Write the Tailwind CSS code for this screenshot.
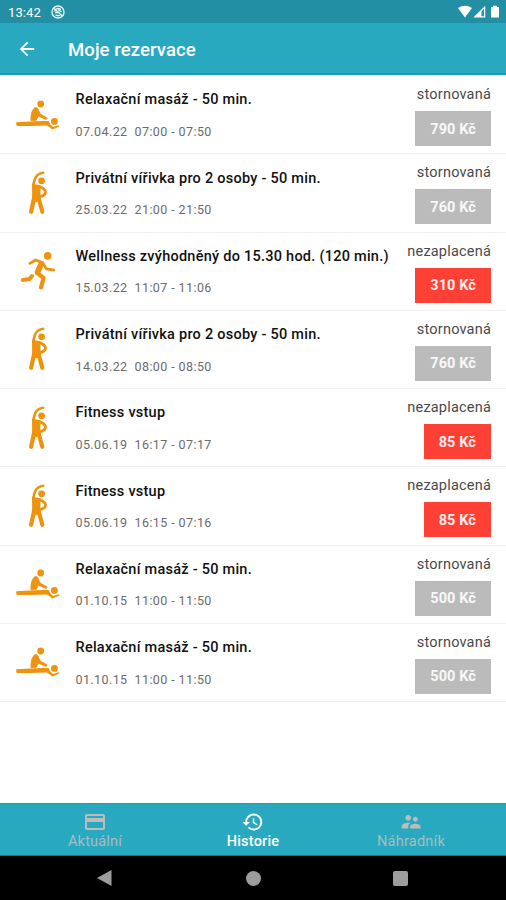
<!DOCTYPE html>
<html lang="cs">
<head>
<meta charset="utf-8">
<title>Moje rezervace</title>
<script src="https://cdn.jsdelivr.net/npm/@tailwindcss/browser@4"></script>
</head>
<body class="bg-white">
<svg class="hidden">
  <symbol id="massage" viewBox="0 0 48 48">
    <g fill="currentColor" stroke="currentColor" stroke-linejoin="round" stroke-linecap="round">
      <circle cx="26.7" cy="13" r="3.4" stroke="none"/>
      <path stroke-width="1" d="M17 29.3C16.8 24 17.8 20 20 17.4C21.4 16 23.5 16.6 24 18.3L26 23L32.5 26.6C33.4 27.3 32.7 28.7 31.6 28.3L24.8 25.2L23 23.2L24.3 25.6L22 29.3Z"/>
      <path stroke="none" d="M2.3 31.2L16 30.6L28 30H34.6L36.4 33.5L39 36L44.6 34.2L45.5 35.6L38.5 38.6L33 34.6L16 35H3.2Q2 35 2.3 31.2Z"/>
      <circle cx="40.4" cy="30.4" r="3.4" stroke="none"/>
    </g>
  </symbol>
  <symbol id="stretch" viewBox="0 0 48 48">
    <circle cx="27.6" cy="11.8" r="3.4" fill="currentColor"/>
    <g fill="none" stroke="currentColor" stroke-linecap="round" stroke-linejoin="round">
      <path stroke-width="2.6" d="M29.2 3.800C25.500 4.400 22.800 6 21.300 9C20.200 11.500 19.700 14 19.300 17"/>
      <path stroke-width="2.8" d="M24 17.200C28.500 18.500 31.500 21 31.500 23.300C31.200 25.600 29 27 26.200 27.600"/>
      <path stroke-width="4.200" d="M20.300 28L17.100 42.800M24.300 28L28.300 42.800"/>
    </g>
    <path fill="currentColor" d="M18 14.500C20 15 24 15.800 26.600 16.600L26.300 31L22.500 33.200L18.200 31Z"/>
  </symbol>
  <symbol id="run" viewBox="0 0 48 48">
    <circle cx="33.7" cy="8.9" r="3.8" fill="currentColor"/>
    <g fill="none" stroke="currentColor" stroke-linecap="round" stroke-linejoin="round">
      <path stroke-width="2.8" d="M15.8 16.4L21.5 13L28.5 15.6L32.4 21.8L39.8 23.2"/>
      <path stroke-width="5.8" d="M27.2 17L23.6 25.2"/>
      <path stroke-width="4.200" d="M23.4 26.2L29.6 31L27 40.4"/>
      <path stroke-width="4" d="M18 29L15.6 32L8.800 33"/>
    </g>
  </symbol>
</svg>
<div class="w-[506px] h-[900px] overflow-hidden flex flex-col font-[Roboto,sans-serif]">
  <div class="h-[23px] shrink-0 bg-[#238fa4] flex items-center pl-2 pr-[6px] text-white">
    <span class="text-[13px] leading-none w-[43px] pt-[2px] tracking-[0.1px]">13:42</span>
    <svg class="w-[14px] h-[14px]" viewBox="0 0 14 14" fill="none" stroke="#e4f3f6">
      <circle cx="7" cy="7" r="6" stroke-width="1.4"/><path stroke-width="1.4" d="M4.500 9.800A3.600 3.600 0 0 0 10 9M3.600 6.500A3.600 3.600 0 0 1 9.800 4.700"/>
      <path stroke-width="1.5" d="M2.5 3L11.5 11M4 7.5H7M7 4.5L10.5 7"/>
    </svg>
    <svg class="ml-auto w-[42px] h-[14px]" viewBox="0 0 42 14">
      <path fill="#fff" d="M0 3Q7 -1.5 14 3L7 12.5Z"/>
      <path fill="none" stroke="#fff" stroke-width="1.3" d="M17 11.8L26.6 2.2V11.8Z"/><path fill="#fff" d="M17 12L23.5 5.5V12Z"/>
      <path fill="#fff" d="M33 2H35V0.7H39V2H41V12.5H33Z"/>
    </svg>
  </div>
  <header class="h-[52px] shrink-0 bg-[#28a9c0] border-b-2 border-[#159fb6] flex items-center text-white">
    <svg class="ml-[17px] mt-[1px] w-5 h-5" viewBox="2 2 20 20" fill="#fff"><path d="M20 11H7.83l5.59-5.59L12 4l-8 8 8 8 1.41-1.41L7.83 13H20z" transform="translate(1.2 1.2) scale(.9)"/></svg>
    <h1 class="ml-[31px] pt-[5px] text-[18.5px] font-medium tracking-[0.1px]">Moje rezervace</h1>
  </header>
  <main id="list" class="flex-1 bg-white pt-px"></main>
  <nav class="h-[53px] shrink-0 bg-[#28a9c0] border-t border-b border-t-[#169fb5] border-b-[#17798a] grid grid-cols-[190px_126px_190px] text-[14.5px] text-[#a9bcc2]">
    <div class="flex flex-col items-center pt-[6px]">
      <svg class="w-6 h-6" viewBox="0 0 24 24" fill="#bcbcbc"><path d="M20 4H4c-1.11 0-1.99.89-1.99 2L2 18c0 1.11.89 2 2 2h16c1.11 0 2-.89 2-2V6c0-1.11-.89-2-2-2zm0 14H4v-6h16v6zm0-10H4V6h16v2z"/></svg>
      <span class="leading-4 tracking-[0.2px]">Aktuální</span>
    </div>
    <div class="flex flex-col items-center pt-[6px] text-white">
      <svg class="w-6 h-6" viewBox="-0.5 -0.7 25.400 25.400" fill="currentColor"><path d="M13 3a9 9 0 0 0-9 9H1l3.890 3.890.070.140L9 12H6c0-3.870 3.130-7 7-7s7 3.130 7 7-3.130 7-7 7c-1.930 0-3.680-.790-4.940-2.060l-1.420 1.420A8.954 8.954 0 0 0 13 21a9 9 0 0 0 0-18zm-1 5v5l4.280 2.540.720-1.210-3.500-2.080V8H12z"/></svg>
      <span class="leading-4 font-medium tracking-[0.2px]">Historie</span>
    </div>
    <div class="flex flex-col items-center pt-[6px]">
      <svg class="w-6 h-6" viewBox="0 0 24 24" fill="#bcbcbc"><path d="M16.5 12c1.38 0 2.49-1.12 2.49-2.5S17.88 7 16.5 7a2.5 2.5 0 0 0 0 5zM9 11c1.66 0 2.99-1.34 2.99-3S10.66 5 9 5 6 6.34 6 8s1.34 3 3 3zm7.5 3c-1.83 0-5.5.92-5.5 2.75V19h11v-2.25c0-1.83-3.67-2.75-5.500-2.750zM9 13c-2.330 0-7 1.170-7 3.500V19h7v-2.250c0-.850.330-2.340 2.370-3.470C10.500 13.100 9.660 13 9 13z" transform="translate(.7 0) scale(.95 .98)"/></svg>
      <span class="leading-4 tracking-[0.25px]">Náhradník</span>
    </div>
  </nav>
  <div class="h-[44px] shrink-0 bg-black flex items-center justify-between pl-[97px] pr-[98px] text-[#9d9d9d]">
    <svg class="w-[15px] h-4" viewBox="0 0 15 16" fill="currentColor"><path d="M0 8L14.500 0V16Z"/></svg>
    <div class="w-[15px] h-[15px] rounded-full bg-[#9d9d9d] ml-px"></div>
    <div class="w-[15px] h-[15px] rounded-[2px] bg-[#9d9d9d]"></div>
  </div>
</div>
<template id="row">
  <article class="h-[78.25px] border-b border-[#f0f0f0] flex pl-[14px] pr-[15px]">
    <svg class="w-12 h-12 mt-[14.5px] text-[#ee930f]"><use/></svg>
    <div class="ml-[13.500px] flex-1 whitespace-nowrap">
      <h2 class="mt-[14.4px] text-[14.500px] leading-5 font-medium text-[#111111] tracking-[0.250px]"></h2>
      <p class="mt-[13.6px] text-[12.500px] leading-4 text-[#6c6c6c] tracking-[0.410px] whitespace-pre"></p>
    </div>
    <div class="flex flex-col items-end">
      <span class="mt-[9px] text-[14.500px] leading-5 text-[#4a4a4a] tracking-[0.200px]"></span>
      <b class="mt-[6px] h-[35px] px-[15px] pt-[2px] flex items-center text-[14.500px] font-bold text-white/90 tracking-[0.1px] whitespace-nowrap"></b>
    </div>
  </article>
</template>
<script>
const items = [
  ['massage', 'Relaxační masáž - 50 min.', '07.04.22  07:00 - 07:50', 'stornovaná', '790 Kč'],
  ['stretch', 'Privátní vířivka pro 2 osoby - 50 min.', '25.03.22  21:00 - 21:50', 'stornovaná', '760 Kč'],
  ['run', 'Wellness zvýhodněný do 15.30 hod. (120 min.)', '15.03.22  11:07 - 11:06', 'nezaplacená', '310 Kč'],
  ['stretch', 'Privátní vířivka pro 2 osoby - 50 min.', '14.03.22  08:00 - 08:50', 'stornovaná', '760 Kč'],
  ['stretch', 'Fitness vstup', '05.06.19  16:17 - 07:17', 'nezaplacená', '85 Kč'],
  ['stretch', 'Fitness vstup', '05.06.19  16:15 - 07:16', 'nezaplacená', '85 Kč'],
  ['massage', 'Relaxační masáž - 50 min.', '01.10.15  11:00 - 11:50', 'stornovaná', '500 Kč'],
  ['massage', 'Relaxační masáž - 50 min.', '01.10.15  11:00 - 11:50', 'stornovaná', '500 Kč']
];
const list = document.getElementById('list');
for (const [icon, title, time, state, price] of items) {
  const row = document.getElementById('row').content.cloneNode(true);
  row.querySelector('use').setAttribute('href', '#' + icon);
  row.querySelector('h2').textContent = title;
  row.querySelector('p').textContent = time;
  row.querySelector('span').textContent = state;
  const badge = row.querySelector('b');
  badge.textContent = price;
  badge.classList.add(state === 'stornovaná' ? 'bg-[#bbbbbb]' : 'bg-[#ff4035]');
  list.append(row);
}
</script>
</body>
</html>
